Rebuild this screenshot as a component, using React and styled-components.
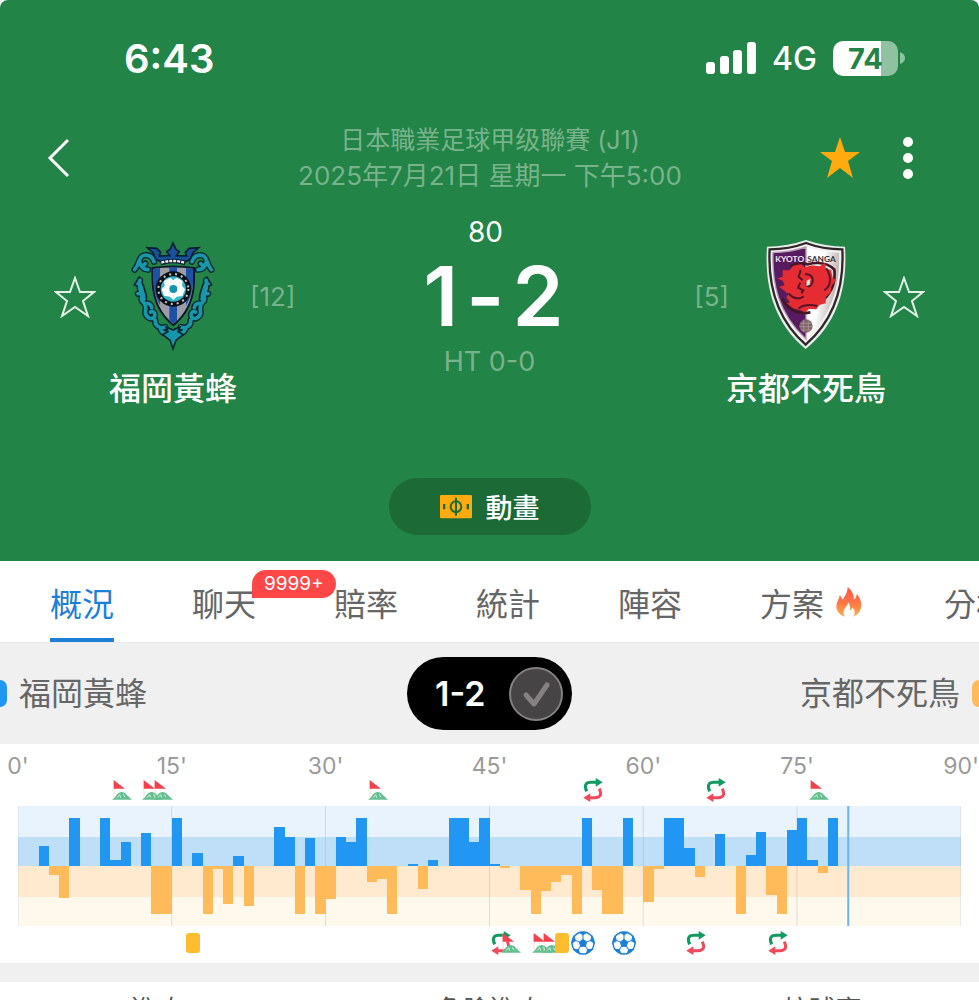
import { useState } from "react";
import styled, { createGlobalStyle } from "styled-components";

const SLOTS = 92;

// minutes -> slot, first half has one extra slot for added time
const axis = [
  { label: "0'", slot: 0 },
  { label: "15'", slot: 15 },
  { label: "30'", slot: 30 },
  { label: "45'", slot: 46 },
  { label: "60'", slot: 61 },
  { label: "75'", slot: 76 },
  { label: "90'", slot: 92 },
];

// [slot, pressure], positive is home, negative is away
const pressure = [
  [2, 20], [3, -9], [4, -32], [5, 48], [8, 48], [9, 6], [10, 24], [12, 33],
  [13, -48], [14, -48], [15, 48], [17, 13], [18, -48], [19, -3], [20, -38],
  [21, 10], [22, -40], [25, 39], [26, 29], [27, -48], [28, 28], [29, -48],
  [30, -33], [31, 29], [32, 24], [33, 48], [34, -16], [35, -13], [36, -48],
  [38, 2], [39, -23], [40, 6], [42, 48], [43, 48], [44, 24], [45, 48],
  [46, 2], [47, -2], [49, -24], [50, -48], [51, -25], [52, -16], [53, -9],
  [54, -48], [55, 48], [56, -24], [57, -48], [58, -48], [59, 48], [61, -36],
  [62, -3], [63, 48], [64, 48], [65, 18], [66, -11], [68, 32], [70, -48],
  [71, 11], [72, 34], [73, -29], [74, -48], [75, 36], [76, 48], [77, 6],
  [78, -7], [79, 48],
];

const homeEvents = [
  { type: "corner", slot: 10 },
  { type: "corner", slot: 13 },
  { type: "corner", slot: 14 },
  { type: "corner", slot: 35 },
  { type: "sub", slot: 56 },
  { type: "sub", slot: 68 },
  { type: "corner", slot: 78 },
];

const awayEvents = [
  { type: "card", slot: 17 },
  { type: "sub", slot: 47 },
  { type: "corner", slot: 48 },
  { type: "corner", slot: 51 },
  { type: "corner", slot: 52 },
  { type: "card", slot: 53 },
  { type: "goal", slot: 55 },
  { type: "goal", slot: 59 },
  { type: "sub", slot: 66 },
  { type: "sub", slot: 74 },
];

const tabs = [
  { id: "overview", label: "概況" },
  { id: "chat", label: "聊天", badge: "9999+" },
  { id: "odds", label: "賠率" },
  { id: "stats", label: "統計" },
  { id: "lineup", label: "陣容" },
  { id: "tips", label: "方案", hot: true },
  { id: "analysis", label: "分析" },
];

const CornerIcon = () => (
  <svg width="20" height="20" viewBox="0 0 60 60">
    <path d="M6 2V56" stroke="#f3c9cc" strokeWidth="2" />
    <path d="M5 0L39 26H5Z" fill="#f5414c" />
    <path d="M0 59Q8 54 12 47Q19 36 30 36Q40 37 47 47L60 59Z" fill="#62c08f" />
    <path
      d="M15 53L23 44L26 53M34 43L39 52"
      stroke="#d5f0e2"
      strokeWidth="3"
      fill="none"
    />
  </svg>
);

const SubIcon = () => (
  <svg width="20" height="24" viewBox="0 0 60 72">
    <g fill="none" strokeWidth="9">
      <path d="M11 40Q-1 13 24 13H42" stroke="#119a62" />
      <path d="M49 32Q61 59 36 59H18" stroke="#ee4a5c" />
    </g>
    <path d="M38 0L59 13L38 26Z" fill="#119a62" />
    <path d="M22 46L1 59L22 72Z" fill="#ee4a5c" />
  </svg>
);

const GoalIcon = () => (
  <svg width="24" height="24" viewBox="0 0 72 72">
    <circle cx="36" cy="36" r="33" fill="#fff" stroke="#1b80dc" strokeWidth="4" />
    <g fill="#1b80dc" stroke="#1b80dc" strokeWidth="3">
      <path d="M36 25L47 33L43 46H29L25 33Z" />
      {[0, 72, 144, 216, 288].map((deg) => (
        <g key={deg} transform={`rotate(${deg} 36 36)`}>
          <path d="M25 4H47L36 12Z" />
          <path d="M36 12V25" />
        </g>
      ))}
    </g>
  </svg>
);

const CardIcon = () => (
  <svg width="14" height="20" viewBox="0 0 14 20">
    <rect width="14" height="20" rx="3" fill="#ffbc2d" />
  </svg>
);

const eventIcons = {
  corner: CornerIcon,
  sub: SubIcon,
  goal: GoalIcon,
  card: CardIcon,
};

const Star = ({ filled }) => (
  <svg width="42" height="42" viewBox="0 0 42 42">
    <path
      d={
        filled
          ? "M21 0L26 15H41L29 24L34 41L21 31L8 41L13 24L1 15H16Z"
          : "M21 2L26 16H40L29 25L34 40L21 31L8 40L13 25L2 16H16Z"
      }
      fill={filled ? "#ffab10" : "none"}
      stroke={filled ? "none" : "#e3f1e6"}
      strokeWidth="2"
    />
  </svg>
);

const Flame = () => (
  <svg width="26" height="30" viewBox="0 0 76 88">
    <defs>
      <linearGradient id="flame" x1="0" y1="0" x2="0" y2="1">
        <stop offset="0" stopColor="#ff5349" />
        <stop offset="0.55" stopColor="#ff7846" />
        <stop offset="1" stopColor="#ffb048" />
      </linearGradient>
    </defs>
    <path
      d="M34 0C48 12 53 22 52 37C58 34 60 29 61 20C70 32 75 43 74 56C72 73 63 82 50 87C58 76 55 65 47 60C46 65 44 67 41 68C42 58 40 50 36 45C35 56 22 62 22 75C22 80 24 84 27 87C9 82 0 69 1 55C2 42 9 36 11 24C15 28 17 32 18 37C27 28 34 14 34 0Z"
      fill="url(#flame)"
    />
  </svg>
);

const HomeCrest = () => {
  const scroll =
    "M90 80C82 54 50 54 46 78C44 91 56 96 64 86M46 76C42 90 38 97 32 104M46 78C50 96 61 104 72 104M48 136C42 158 50 166 55 182C50 190 52 198 58 202C66 208 66 222 64 234C68 250 86 256 92 244C95 234 88 228 80 231M42 176C48 174 55 180 60 192M64 206C76 202 83 212 83 218M94 256C92 273 108 282 124 276M110 283C116 297 132 300 138 288";
  return (
    <svg width="98" height="120" viewBox="0 0 294 360">
      {[false, true].map((flip) => (
        <g
          key={String(flip)}
          transform={flip ? "translate(294 0) scale(-1 1)" : undefined}
          fill="none"
          strokeLinecap="round"
          strokeLinejoin="round"
        >
          <path d={scroll} stroke="#0b262d" strokeWidth="19" />
          <path
            d="M46 126L31 150L44 154L50 202L68 185L58 151Z"
            fill="#1597ab"
            stroke="#0b262d"
            strokeWidth="5"
          />
          <path d={scroll} stroke="#1a96aa" strokeWidth="11" />
        </g>
      ))}
      <path
        d="M147 341L138 316L116 299L132 290L126 276L147 285L168 276L162 290L178 299L156 316Z"
        fill="#1597ab"
        stroke="#0b262d"
        strokeWidth="5"
      />
      <path
        d="M147 24L156 43L166 50L157 62L188 63L184 52L196 40L224 38L207 53L199 72L184 80H110L95 72L87 53L70 38L98 40L110 52L106 63L137 62L128 50L138 43Z"
        fill="#16539a"
        stroke="#0c1c33"
        strokeWidth="5"
      />
      <path d="M110 84Q147 72 184 84" stroke="#0c1c33" strokeWidth="14" fill="none" />
      <path
        d="M112 83Q147 73 182 83"
        stroke="#e8ecef"
        strokeWidth="7"
        strokeDasharray="9 3"
        fill="none"
      />
      <path
        d="M85 99Q147 90 210 99V142C208 198 184 242 148 271C112 242 88 198 86 142Z"
        fill="#9b9ca5"
        stroke="#10192b"
        strokeWidth="6"
      />
      <path
        d="M88 102L108 99V210C94 186 89 164 88 142ZM136 97H159V257L148 266L136 256ZM186 99L207 102V142C206 166 200 188 186 212Z"
        fill="#1c51a3"
      />
      <circle cx="148" cy="162" r="53" fill="#0b0e13" />
      <circle
        cx="148"
        cy="162"
        r="45"
        fill="none"
        stroke="#c1c6c9"
        strokeWidth="6"
        strokeDasharray="6 12"
      />
      <circle cx="148" cy="162" r="38" fill="#37b7ca" />
      <path
        d="M148 136L158 128L176 138L174 153L183 163L175 183L158 185L148 195L138 185L120 182L113 163L122 153L120 138L138 128Z"
        fill="#fff"
      />
      <circle cx="148" cy="162" r="12" fill="#1595ae" />
    </svg>
  );
};

const AwayCrest = () => (
  <svg width="98" height="120" viewBox="0 0 294 360">
    <defs>
      <linearGradient id="silver" x1="0" y1="0" x2="1" y2="0.4">
        <stop offset="0.5" stopColor="#ffffff" />
        <stop offset="1" stopColor="#b7aaa8" />
      </linearGradient>
    </defs>
    <path
      d="M147 15C187 29 226 35 264 35C271 140 251 257 146 342C43 257 23 140 30 35C68 35 107 29 147 15Z"
      fill="#e9efeb"
    />
    <path
      d="M147 24C184 38 220 43 256 43C261 140 242 246 146 329C52 246 33 140 38 43C74 43 110 38 147 24Z"
      fill="#f4f1f1"
      stroke="#302529"
      strokeWidth="7"
    />
    <path d="M147 36C182 48 216 52 246 53C249 140 233 233 147 312Z" fill="url(#silver)" />
    <path
      d="M147 36C112 48 78 52 48 53C45 140 61 233 147 312Z"
      fill="#561b60"
      stroke="#b59caf"
      strokeWidth="4"
    />
    <g fontFamily="Lato, sans-serif" fontWeight="700" fontSize="25">
      <text x="55" y="81" fill="#f5eaf5">KYOTO</text>
      <text x="151" y="81" fill="#38303b">SANGA</text>
    </g>
    <path
      d="M100 95Q125 80 151 88Q205 75 232 104M232 102Q238 158 202 192M76 190Q100 242 160 232"
      stroke="#451725"
      strokeWidth="8"
      fill="none"
    />
    <path
      d="M77 106L97 106L109 92L132 88L143 97L165 91L187 94L204 84L207 101L222 105L227 129L237 135L223 154L222 172L207 185L206 205L187 210L178 223L157 222L143 232L127 224L108 220L90 205L99 202L88 187L95 177L78 164L66 155L83 151L77 137L60 130L77 125Z"
      fill="#e52c32"
    />
    <path
      d="M208 100C224 126 223 153 202 166M131 105L125 125L137 136M144 118C162 115 173 130 164 147C157 158 146 154 149 143M95 175C110 193 128 194 140 184M125 220Q146 205 181 213M130 143L123 158L139 166L133 175"
      fill="none"
      stroke="#551527"
      strokeWidth="6"
    />
    <path d="M149 137L160 131L158 149L148 153Z" fill="#f2ded9" />
    <circle cx="147" cy="273" r="20" fill="#806371" />
    <path
      d="M130 265H164M127 275H167M132 285H162M140 254V292M154 254V292"
      stroke="#b7a193"
      strokeWidth="2"
    />
  </svg>
);

const EventRow = ({ events, height }) => (
  <Track $height={height}>
    {events.map(({ type, slot }) => {
      const Icon = eventIcons[type];
      return (
        <Mark key={`${type}-${slot}`} $slot={slot}>
          <Icon />
        </Mark>
      );
    })}
  </Track>
);

const PressureChart = () => (
  <Chart viewBox={`0 0 ${SLOTS} 120`} preserveAspectRatio="none">
    <rect width={SLOTS} height="31" fill="#e8f3fe" />
    <rect y="31" width={SLOTS} height="29" fill="#bfdff9" />
    <rect y="60" width={SLOTS} height="31" fill="#ffead0" />
    <rect y="91" width={SLOTS} height="29" fill="#fff8ed" />
    {axis.map(({ slot }) => (
      <path
        key={slot}
        d={`M${slot} 0V120`}
        stroke="#8090a0"
        strokeOpacity="0.25"
        vectorEffect="non-scaling-stroke"
      />
    ))}
    <g shapeRendering="crispEdges">
      {pressure.map(([slot, value]) => (
        <rect
          key={slot}
          x={slot}
          y={value > 0 ? 60 - value : 60}
          width="1"
          height={Math.abs(value)}
          fill={value > 0 ? "#2196f3" : "#ffba5a"}
        />
      ))}
    </g>
    <path
      d="M81 0V120"
      stroke="#6fb3ee"
      strokeWidth="2"
      vectorEffect="non-scaling-stroke"
    />
  </Chart>
);

const App = () => {
  const [active, setActive] = useState("overview");
  return (
    <Page>
      <GlobalStyle />
      <Header>
        <StatusBar>
          <Clock>6:43</Clock>
          <StatusIcons>
            <svg width="50" height="32" viewBox="0 0 50 32" fill="#fff">
              <rect y="20" width="9" height="12" rx="3" />
              <rect x="14" y="14" width="9" height="18" rx="3" />
              <rect x="27" y="8" width="9" height="24" rx="3" />
              <rect x="41" width="9" height="32" rx="3" />
            </svg>
            <Network>4G</Network>
            <Battery>
              <BatteryLevel>74</BatteryLevel>
              <svg width="5" height="12" viewBox="0 0 5 12">
                <path d="M0 0Q5 2 5 6T0 12Z" fill="#90c1a1" />
              </svg>
            </Battery>
          </StatusIcons>
        </StatusBar>
        <NavBar>
          <IconButton aria-label="返回">
            <svg width="24" height="40" viewBox="0 0 24 40" fill="none">
              <path d="M21 2L3 20L21 38" stroke="#fff" strokeWidth="3" />
            </svg>
          </IconButton>
          <Heading>
            <League>日本職業足球甲级聯賽 (J1)</League>
            <Kickoff>2025年7月21日 星期一 下午5:00</Kickoff>
          </Heading>
          <Actions>
            <IconButton aria-label="收藏">
              <Star filled />
            </IconButton>
            <IconButton aria-label="更多">
              <svg width="10" height="42" viewBox="0 0 10 42" fill="#fff">
                <circle cx="5" cy="5" r="5" />
                <circle cx="5" cy="21" r="5" />
                <circle cx="5" cy="37" r="5" />
              </svg>
            </IconButton>
          </Actions>
        </NavBar>
        <Match>
          <Side>
            <FollowButton aria-label="關注福岡黃蜂">
              <Star />
            </FollowButton>
            <Team>
              <HomeCrest />
              <TeamName>福岡黃蜂</TeamName>
            </Team>
            <Rank>[12]</Rank>
          </Side>
          <Result>
            <Minute>80</Minute>
            <Score>
              <span>1</span>
              <span>-</span>
              <span>2</span>
            </Score>
            <HalfTime>HT 0-0</HalfTime>
          </Result>
          <Side $away>
            <FollowButton aria-label="關注京都不死鳥">
              <Star />
            </FollowButton>
            <Team>
              <AwayCrest />
              <TeamName>京都不死鳥</TeamName>
            </Team>
            <Rank>[5]</Rank>
          </Side>
        </Match>
        <AnimationButton>
          <svg width="32" height="24" viewBox="0 0 96 72">
            <rect width="96" height="70" rx="4" fill="#ffab10" />
            <g fill="none" stroke="#1c6b37" strokeWidth="6">
              <circle cx="48" cy="35" r="16" />
              <path d="M48 8V62" />
            </g>
            <path d="M9 27H16V43H9ZM80 27H87V43H80Z" fill="#1c6b37" />
          </svg>
          動畫
        </AnimationButton>
      </Header>
      <Tabs>
        {tabs.map((tab) => (
          <Tab
            key={tab.id}
            $active={active === tab.id}
            $hot={tab.hot}
            onClick={() => setActive(tab.id)}
          >
            {tab.label}
            {tab.hot && <Flame />}
            {tab.badge && <Badge>{tab.badge}</Badge>}
          </Tab>
        ))}
      </Tabs>
      <TeamsBar>
        <Legend>
          <Chip $color="#2196f3" />
          福岡黃蜂
        </Legend>
        <ScorePill>
          1-2
          <svg width="56" height="56" viewBox="0 0 56 56">
            <circle cx="28" cy="28" r="26" fill="#474445" stroke="#858182" strokeWidth="2" />
            <path
              d="M18 29L26 38L39 19"
              fill="none"
              stroke="#858182"
              strokeWidth="5"
              strokeLinecap="round"
              strokeLinejoin="round"
            />
          </svg>
        </ScorePill>
        <Legend $away>
          <Chip $color="#ffba5a" $away />
          京都不死鳥
        </Legend>
      </TeamsBar>
      <Timeline>
        <Track $height={24}>
          {axis.map(({ label, slot }) => (
            <AxisLabel key={slot} $slot={slot}>
              {label}
            </AxisLabel>
          ))}
        </Track>
        <EventRow events={homeEvents} height={24} />
        <PressureChart />
        <EventRow events={awayEvents} height={34} />
      </Timeline>
      <Stats>
        <span>進攻</span>
        <span>危險進攻</span>
        <span>控球率</span>
      </Stats>
    </Page>
  );
};

const GlobalStyle = createGlobalStyle`
  * {
    box-sizing: border-box;
  }
  body {
    margin: 0;
    background: #fff;
    font-family: Inter, "Noto Sans CJK TC", sans-serif;
  }
  button {
    padding: 0;
    border: none;
    background: none;
    font: inherit;
    color: inherit;
    cursor: pointer;
  }
  svg {
    display: block;
    flex-shrink: 0;
  }
`;

const Page = styled.main`
  height: 100vh;
  overflow: hidden;
`;
const Header = styled.header`
  display: flex;
  flex-direction: column;
  padding-bottom: 26px;
  border-radius: 8px 8px 0 0;
  background: #228447;
  color: #fff;
`;
const StatusBar = styled.div`
  display: flex;
  align-items: center;
  justify-content: space-between;
  height: 116px;
  padding: 0 74px 0 124px;
`;
const Clock = styled.span`
  font-size: 40px;
  font-weight: 600;
`;
const StatusIcons = styled.div`
  display: flex;
  align-items: center;
  gap: 16px;
`;
const Network = styled.span`
  font-size: 32px;
  font-weight: 500;
`;
const Battery = styled.div`
  display: flex;
  align-items: center;
  gap: 2px;
`;
const BatteryLevel = styled.span`
  width: 65px;
  height: 35px;
  border-radius: 10px;
  background: linear-gradient(to right, #fff 74%, #90c1a1 74%);
  color: #228447;
  font-size: 29px;
  font-weight: 700;
  line-height: 35px;
  text-align: center;
`;
const NavBar = styled.div`
  display: grid;
  grid-template-columns: 1fr auto 1fr;
  align-items: center;
  height: 84px;
  padding: 0 66px 0 47px;
`;
const IconButton = styled.button`
  justify-self: start;
`;
const Heading = styled.div`
  padding-left: 20px;
  line-height: 36px;
  text-align: center;
  color: #78b38c;
`;
const League = styled.h1`
  margin: 0;
  font-size: 25px;
  font-weight: 400;
`;
const Kickoff = styled.p`
  margin: 0;
  font-size: 26px;
`;
const Actions = styled.div`
  display: flex;
  align-items: center;
  justify-content: flex-end;
  gap: 42px;
`;
const Match = styled.section`
  display: grid;
  grid-template-columns: 1fr auto 1fr;
  padding: 14px 54px 0;
`;
const Side = styled.div`
  display: flex;
  flex-direction: ${({ $away }) => ($away ? "row-reverse" : "row")};
  align-items: flex-start;
  gap: 2px;
  padding-top: 21px;
`;
const FollowButton = styled.button`
  display: flex;
  align-items: center;
  height: 124px;
`;
const Team = styled.div`
  display: flex;
  flex-direction: column;
  align-items: center;
  gap: 14px;
  width: 150px;
`;
const TeamName = styled.h2`
  margin: 0;
  font-size: 32px;
  font-weight: 500;
  line-height: 40px;
  white-space: nowrap;
`;
const Rank = styled.span`
  font-size: 26px;
  line-height: 124px;
  color: #78b38c;
`;
const Result = styled.div`
  text-align: center;
`;
const Minute = styled.div`
  padding-right: 8px;
  font-size: 28px;
  line-height: 36px;
`;
const Score = styled.div`
  display: flex;
  justify-content: center;
  gap: 8px;
  padding-left: 8px;
  font-size: 82px;
  font-weight: 600;
  line-height: 94px;
`;
const HalfTime = styled.div`
  font-size: 27px;
  line-height: 36px;
  color: #78b38c;
`;
const AnimationButton = styled.button`
  display: flex;
  align-items: center;
  align-self: center;
  justify-content: center;
  gap: 14px;
  width: 202px;
  height: 57px;
  margin-top: 69px;
  border-radius: 29px;
  background: #1c6b37;
  font-size: 27px;
  font-weight: 500;
`;
const Tabs = styled.nav`
  display: flex;
  gap: 78px;
  height: 82px;
  padding: 0 50px;
  overflow: hidden;
  border-bottom: 1px solid #e8e8e8;
`;
const Tab = styled.button`
  position: relative;
  display: flex;
  flex-shrink: 0;
  align-items: center;
  gap: 12px;
  padding-right: ${({ $hot }) => ($hot ? 4 : 0)}px;
  border-top: 4px solid transparent;
  border-bottom: 4px solid
    ${({ $active }) => ($active ? "#1c80d9" : "transparent")};
  font-size: 32px;
  white-space: nowrap;
  color: ${({ $active }) => ($active ? "#1c80d9" : "#666")};
`;
const Badge = styled.span`
  position: absolute;
  top: 5px;
  left: 60px;
  height: 28px;
  padding: 0 12px;
  border-radius: 14px 14px 14px 0;
  background: #ff4748;
  color: #fff;
  font-size: 19px;
  line-height: 28px;
`;
const TeamsBar = styled.div`
  display: grid;
  grid-template-columns: 1fr auto 1fr;
  align-items: center;
  height: 101px;
  background: #f0f0f0;
`;
const Legend = styled.div`
  display: flex;
  flex-direction: ${({ $away }) => ($away ? "row-reverse" : "row")};
  align-items: center;
  gap: 12px;
  font-size: 32px;
  line-height: 40px;
  color: #666;
`;
const Chip = styled.i`
  width: 7px;
  height: 27px;
  border-radius: ${({ $away }) => ($away ? "7px 0 0 7px" : "0 7px 7px 0")};
  background: ${({ $color }) => $color};
`;
const ScorePill = styled.button`
  display: flex;
  align-items: center;
  justify-content: space-between;
  width: 165px;
  height: 73px;
  padding: 0 8px 0 28px;
  border-radius: 37px;
  background: #000;
  color: #fff;
  font-size: 34px;
  font-weight: 600;
`;
const Timeline = styled.section`
  padding: 10px 18px 3px;
`;
const Track = styled.div`
  display: grid;
  grid-template-columns: repeat(${SLOTS}, minmax(0, 1fr));
  grid-template-rows: ${({ $height }) => $height}px;
`;
const Mark = styled.span`
  display: flex;
  grid-row: 1;
  grid-column: ${({ $slot }) => $slot + 1};
  align-items: center;
  justify-content: center;
  width: 2px;
`;
const AxisLabel = styled(Mark)`
  width: 0;
  font-size: 23px;
  color: #9a9a9a;
`;
const Chart = styled.svg`
  width: 100%;
  height: 120px;
  margin-top: 4px;
`;
const Stats = styled.section`
  display: grid;
  grid-template-columns: repeat(3, 1fr);
  gap: 20px;
  padding: 8px 0;
  border-top: 19px solid #f0f0f0;
  font-size: 26px;
  line-height: 40px;
  text-align: center;
  color: #555;
`;

export default App;
